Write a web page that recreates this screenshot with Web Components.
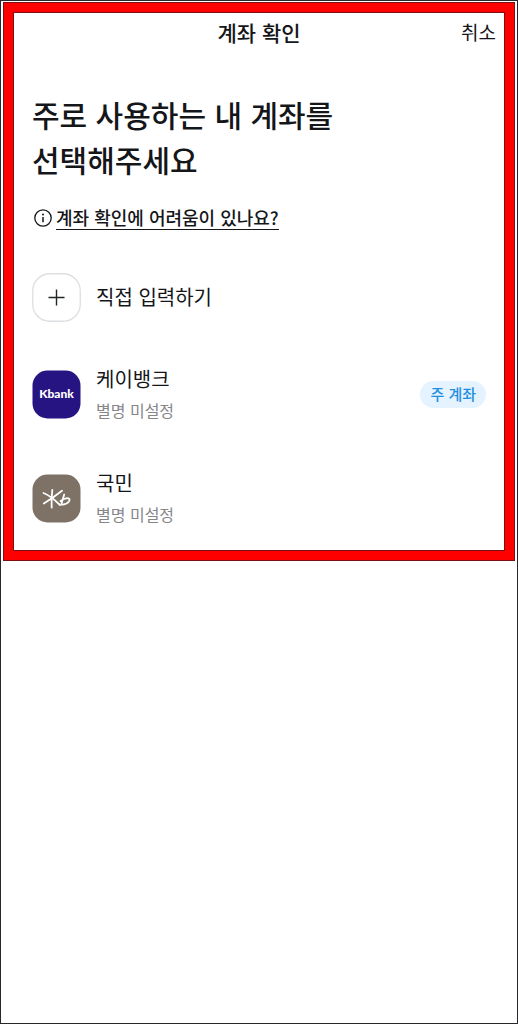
<!DOCTYPE html>
<html lang="ko">
<head>
<meta charset="utf-8">
<meta name="viewport" content="width=device-width, initial-scale=1">
<title>계좌 확인</title>
<style>
  * { box-sizing: border-box; }
  body {
    margin: 0;
    min-height: 100vh;
    padding: 1px 2px;
    border: 1px solid #29272b;
    background: #fff;
    color: #141619;
    font-family: "Noto Sans CJK KR", sans-serif;
  }
</style>
</head>
<body>
<highlight-frame>
  <page-header heading="계좌 확인" action="취소"></page-header>
  <account-intro>
    <span slot="title">주로 사용하는 내 계좌를<br>선택해주세요</span>
    <span slot="help">계좌 확인에 어려움이 있나요?</span>
  </account-intro>
  <account-list>
    <account-item name="직접 입력하기">
      <bank-icon slot="icon" kind="add"></bank-icon>
    </account-item>
    <account-item name="케이뱅크" nickname="별명 미설정">
      <bank-icon slot="icon" kind="kbank"></bank-icon>
      <status-badge slot="badge">주 계좌</status-badge>
    </account-item>
    <account-item name="국민" nickname="별명 미설정">
      <bank-icon slot="icon" kind="kb"></bank-icon>
    </account-item>
  </account-list>
</highlight-frame>

<script>
class HighlightFrame extends HTMLElement {
  constructor() {
    super();
    this.attachShadow({ mode: "open" });
    this.shadowRoot.innerHTML = `
      <style>
        :host { display: block; padding: 9px; background: #ff0000; border: 1px solid #7a1014; }
        main { display: block; padding-bottom: 20px; background: #fff; border: 1px solid #7a1014; }
      </style>
      <main><slot></slot></main>
    `;
  }
}

class PageHeader extends HTMLElement {
  constructor() {
    super();
    this.attachShadow({ mode: "open" });
  }

  connectedCallback() {
    this.shadowRoot.innerHTML = `
      <style>
        :host { display: block; }
        header { display: grid; grid-template-columns: 1fr auto 1fr; align-items: center; height: 37px; padding: 0 8px; }
        h1 { grid-column: 2; margin: 0; font-size: 21px; line-height: 32px; font-weight: 500; }
        button { justify-self: end; padding: 0; border: 0; background: none; color: inherit; font: inherit; font-size: 19px; line-height: 32px; cursor: pointer; }
      </style>
      <header>
        <h1>${this.getAttribute("heading")}</h1>
        <button type="button">${this.getAttribute("action")}</button>
      </header>
    `;
  }
}

class AccountIntro extends HTMLElement {
  constructor() {
    super();
    this.attachShadow({ mode: "open" });
    this.shadowRoot.innerHTML = `
      <style>
        :host { display: block; padding: 42px 18px 0; }
        h2 { margin: 0; font-size: 30px; line-height: 45px; font-weight: 500; }
        .help { display: flex; align-items: center; gap: 4px; margin-top: 23px; }
        svg { flex: none; width: 20px; height: 20px; }
        a { border-bottom: 1px solid #141619; color: inherit; font-size: 18px; line-height: 24px; font-weight: 500; text-decoration: none; }
      </style>
      <h2><slot name="title"></slot></h2>
      <div class="help">
        <svg viewBox="0 0 20 20" fill="none" stroke="#141619" aria-hidden="true">
          <circle cx="11" cy="10" r="8.2" stroke-width="1.3"/>
          <path d="M11 9v5.2" stroke-width="1.5"/>
          <circle cx="11" cy="6.6" r="1" fill="#141619" stroke="none"/>
        </svg>
        <a href="#help"><slot name="help"></slot></a>
      </div>
    `;
  }
}

class AccountList extends HTMLElement {
  constructor() {
    super();
    this.attachShadow({ mode: "open" });
    this.shadowRoot.innerHTML = `
      <style>
        :host { display: flex; flex-direction: column; gap: 41px; padding: 43px 18px 0; }
      </style>
      <slot></slot>
    `;
  }
}

class AccountItem extends HTMLElement {
  constructor() {
    super();
    this.attachShadow({ mode: "open" });
  }

  connectedCallback() {
    const nickname = this.getAttribute("nickname");
    this.shadowRoot.innerHTML = `
      <style>
        :host { display: block; }
        button { display: flex; align-items: center; gap: 15px; width: 100%; padding: 0; border: 0; background: none; color: inherit; font: inherit; text-align: left; cursor: pointer; }
        .text { display: flex; flex-direction: column; gap: 3px; flex: 1; padding: 1px 0 3px; }
        .name { font-size: 20px; line-height: 30px; }
        .nickname { color: #85868a; font-size: 16px; line-height: 26px; }
      </style>
      <button type="button">
        <slot name="icon"></slot>
        <span class="text">
          <span class="name">${this.getAttribute("name")}</span>
          ${nickname ? `<span class="nickname">${nickname}</span>` : ""}
        </span>
        <slot name="badge"></slot>
      </button>
    `;
  }
}

class StatusBadge extends HTMLElement {
  constructor() {
    super();
    this.attachShadow({ mode: "open" });
    this.shadowRoot.innerHTML = `
      <style>
        :host { display: block; padding: 0 10px 1px; border-radius: 14px; background: #e4f3ff; color: #1f8fe0; font-size: 15px; line-height: 26px; font-weight: 500; white-space: nowrap; }
      </style>
      <slot></slot>
    `;
  }
}

const BANK_ICONS = {
  add: `
    <rect x=".75" y=".75" width="47.5" height="47.5" rx="17" fill="#fff" stroke="#dcdfe1" stroke-width="1.3"/>
    <path d="M16.5 24.5h16M24.5 16.5v16" fill="none" stroke="#222426" stroke-width="1.4"/>`,
  kbank: `
    <rect x=".5" y=".5" width="48" height="48" rx="15" fill="#251481"/>
    <text x="24.5" y="28" text-anchor="middle" fill="#fff" font-family="Lato, sans-serif" font-size="12" font-weight="900">Kbank</text>`,
  kb: `
    <rect x=".5" y=".5" width="48" height="48" rx="15" fill="#7d7265"/>
    <g fill="none" stroke="#fff" stroke-width="1.8" stroke-linecap="round" stroke-linejoin="round">
      <path d="M20.3 16Q19.2 25 19.7 33.5"/>
      <path d="M11.5 19Q19 22 28 31"/>
      <path d="M30 16.8Q21 24 11.8 29.5"/>
      <path d="M32.2 20.5L29.2 30.5Q34 31 37 27.5Q38.8 24.2 35 24.2Q32.5 24.6 28.5 27"/>
    </g>`
};

class BankIcon extends HTMLElement {
  constructor() {
    super();
    this.attachShadow({ mode: "open" });
  }

  connectedCallback() {
    this.shadowRoot.innerHTML = `
      <style>
        :host { display: block; flex: none; width: 49px; height: 49px; }
        svg { display: block; width: 100%; height: 100%; }
      </style>
      <svg viewBox="0 0 49 49">${BANK_ICONS[this.getAttribute("kind")]}</svg>
    `;
  }
}

customElements.define("highlight-frame", HighlightFrame);
customElements.define("page-header", PageHeader);
customElements.define("account-intro", AccountIntro);
customElements.define("account-list", AccountList);
customElements.define("account-item", AccountItem);
customElements.define("status-badge", StatusBadge);
customElements.define("bank-icon", BankIcon);
</script>
</body>
</html>
